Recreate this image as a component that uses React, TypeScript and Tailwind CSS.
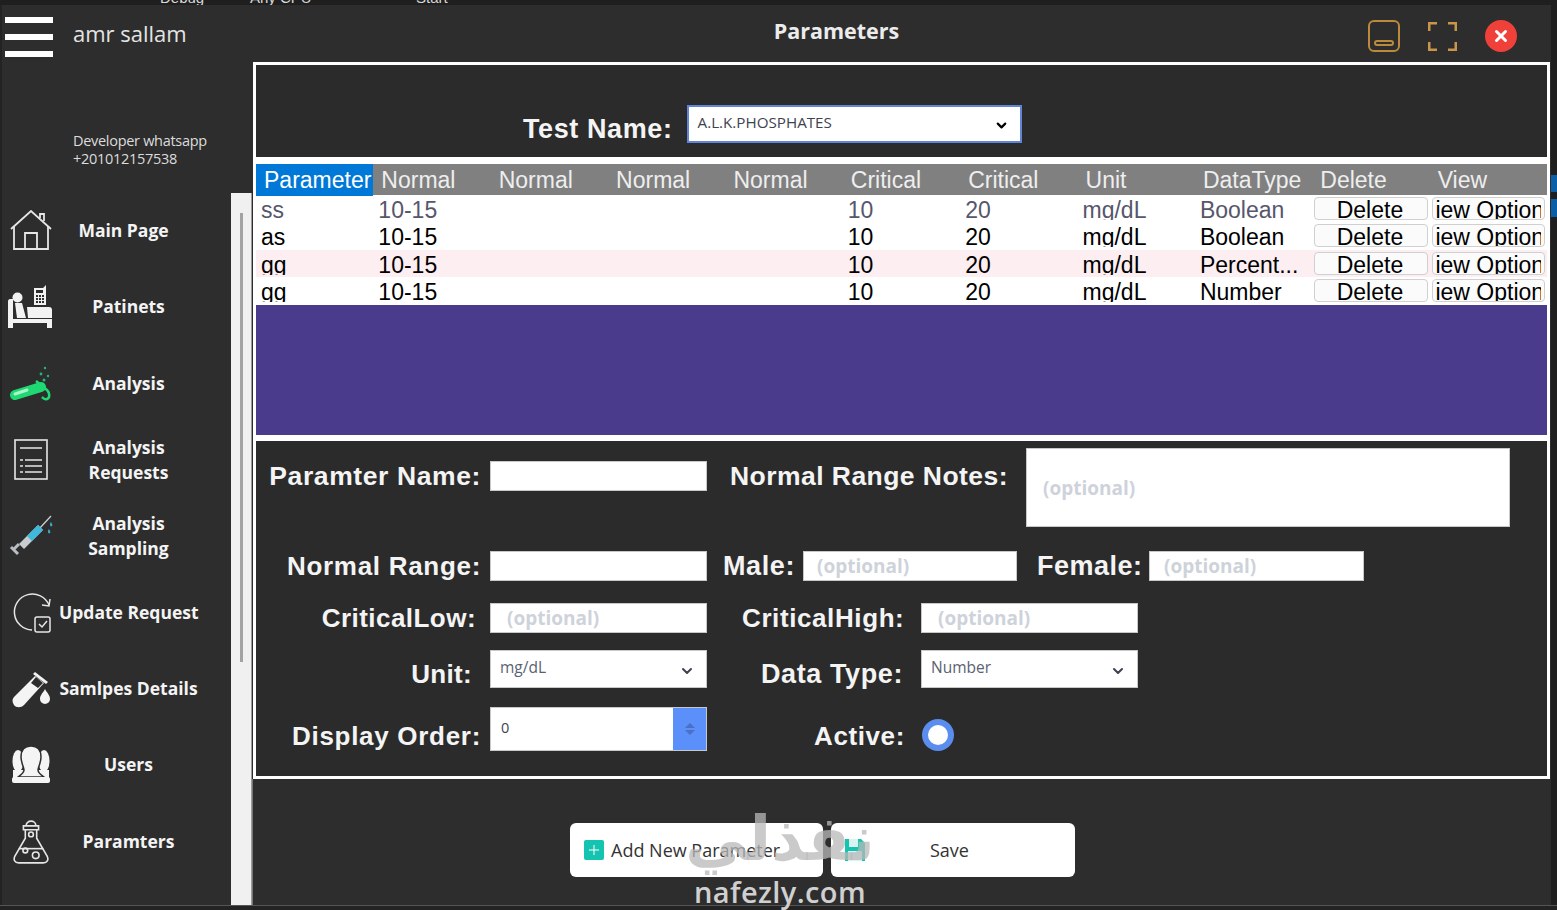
import React from 'react';
import { ChevronDown, X, Plus } from 'lucide-react';

const HomeIcon = () => (
  <svg width="42" height="42" viewBox="0 0 42 42" fill="none" stroke="#e6e6e6" strokeWidth="1.8">
    <path d="M1 19 21 1l20 18" />
    <path d="M30 8V4h4v7" />
    <path d="M4 16v23h34V16" />
    <path d="M15 39V23h12v16" />
  </svg>
);

const BedIcon = () => (
  <svg width="46" height="44" viewBox="0 0 46 44" fill="#f2f2f2">
    <circle cx="9.500" cy="12.500" r="5" />
    <path d="M0 16c0-1 1-2 2-2h3v29H0z" />
    <path d="M7 18h7l4 15H9z" />
    <path d="M19 22h22c2 0 3 1 3 3v8H20z" />
    <path d="M5 34h39v4h0v5h-5v-5H5z" />
    <path d="M26 3h9l3-3v20H26z" />
    <path d="M28 5h7v3h-7z" fill="#2d2d2d" />
    <path d="M28 10h2v2h-2zM31 10h2v2h-2zM34 10h2v2h-2zM28 13h2v2h-2zM31 13h2v2h-2zM34 13h2v2h-2zM28 16h2v2h-2zM31 16h2v2h-2zM34 16h2v2h-2z" fill="#2d2d2d" />
  </svg>
);

const TubeIcon = () => (
  <svg width="44" height="36" viewBox="0 0 44 36" fill="none">
    <path d="M6 29 32 21" stroke="#1fd873" strokeWidth="10" strokeLinecap="round" />
    <path d="M6 28 18 24" stroke="#a8f5c8" strokeWidth="3" strokeLinecap="round" />
    <path d="M27 15l11 9c3 3 3 8 0 9-3 1-4-1-5-2" stroke="#1fd873" strokeWidth="2.500" />
    <g fill="#1fb87a">
      <circle cx="36" cy="2" r="1.200" />
      <circle cx="32" cy="8" r="1.400" />
      <circle cx="39" cy="10" r="1.200" />
      <circle cx="35" cy="14" r="1.500" />
    </g>
  </svg>
);

const ListIcon = () => (
  <svg width="34" height="42" viewBox="0 0 34 42" fill="none" stroke="#e6e6e6" strokeWidth="1.600">
    <rect x="1" y="1" width="32" height="39" />
    <path d="M6 9h22M11 21h17M11 27h17M11 33h17" />
    <path d="M6 21h3M6 27h3M6 33h3" />
  </svg>
);

const SyringeIcon = () => (
  <svg width="44" height="44" viewBox="0 0 44 44" fill="none">
    <path d="M30 15 42 2" stroke="#cfd4d8" strokeWidth="1.200" />
    <path d="M10 30 29 11l5 5-19 19z" fill="#c6ccd0" />
    <path d="M18 22 29 11l5 5-11 11z" fill="#3fb8dc" />
    <path d="M10 30l-5 5M2 33l7 7" stroke="#b8bec2" strokeWidth="3" />
    <path d="M42 8c1 2 2 3 1 4s-2 0-2-1 0-2 1-3zM40 15c1 2 2 3 1 4s-2 0-2-1 0-2 1-3z" fill="#38a8cc" />
  </svg>
);

const UpdateIcon = () => (
  <svg width="42" height="42" viewBox="0 0 42 42" fill="none" stroke="#e6e6e6" strokeWidth="1.500">
    <path d="M39 13A18 18 0 1 0 22 38" />
    <path d="M32 13l7 1 1-7" />
    <rect x="25" y="25" width="15" height="15" rx="2" />
    <path d="m29 32 3 3 5-6" />
  </svg>
);

const SampleIcon = () => (
  <svg width="40" height="38" viewBox="0 0 40 38" fill="#f4f4f4">
    <path d="M24 6 33 13 13 35c-3 3-8 3-10 0s-2-6 0-8z" />
    <path d="M24 2l13 10-2 2-13-10z" />
    <path d="M25 7l7 6-5 5-7-5z" fill="#2d2d2d" />
    <path d="M34 19c2 4 5 6 5 10a5 5 0 0 1-10 0c0-4 3-6 5-10z" />
  </svg>
);

const UsersIcon = () => (
  <svg width="38" height="38" viewBox="0 0 38 38" fill="#f4f4f4">
    <ellipse cx="6" cy="15" rx="5.500" ry="11" />
    <ellipse cx="32" cy="15" rx="5.500" ry="11" />
    <path d="M1 24h36v8H1z" />
    <path d="M19 0c6 0 10 4 10 11 0 6-3 10-3 13 0 3 3 5 6 7H6c3-2 6-4 6-7 0-3-3-7-3-13C9 4 13 0 19 0z" stroke="#2d2d2d" strokeWidth="1.500" />
    <rect x="0" y="31" width="38" height="6" rx="2" />
  </svg>
);

const FlaskIcon = () => (
  <svg width="36" height="46" viewBox="0 0 38 46" fill="none" stroke="#e6e6e6" strokeWidth="1.700">
    <path d="M14 5a5 4 0 0 1 10 0" />
    <path d="M11 6h16v4H11zM13 10v9L2 38c-2 4 0 7 4 7h26c4 0 6-3 4-7L25 19v-9" />
    <circle cx="19" cy="15" r="2.500" />
    <path d="M6 30h26" />
    <circle cx="13" cy="32" r="2.500" />
    <circle cx="24" cy="37" r="3.500" />
  </svg>
);

const DocIcon = () => (
  <svg width="32" height="12" viewBox="0 0 32 12" fill="#f4f4f4">
    <path d="M1 1h19l11 11H1z" />
  </svg>
);

const navItems = [
  { icon: <HomeIcon />, label: ['Main Page'], extra: 'pr-[10px]' },
  { icon: <BedIcon />, label: ['Patinets'], extra: '' },
  { icon: <TubeIcon />, label: ['Analysis'], extra: '' },
  { icon: <ListIcon />, label: ['Analysis', 'Requests'], extra: '' },
  { icon: <SyringeIcon />, label: ['Analysis', 'Sampling'], extra: '' },
  { icon: <UpdateIcon />, label: ['Update Request'], extra: '' },
  { icon: <SampleIcon />, label: ['Samlpes Details'], extra: '' },
  { icon: <UsersIcon />, label: ['Users'], extra: '' },
  { icon: <FlaskIcon />, label: ['Paramters'], extra: '' },
];

const headers = ['Parameter', 'Normal', 'Normal', 'Normal', 'Normal', 'Critical', 'Critical', 'Unit', 'DataType', 'Delete', 'View'];

const rows = [
  { name: 'ss', type: 'Boolean', bg: 'bg-white', text: 'text-[#56566c]', h: 'h-[27px]' },
  { name: 'as', type: 'Boolean', bg: 'bg-white', text: 'text-black', h: 'h-[28px]' },
  { name: 'gg', type: 'Percent...', bg: 'bg-[#fdeef1]', text: 'text-black', h: 'h-[27px]' },
  { name: 'gg', type: 'Number', bg: 'bg-white', text: 'text-black', h: 'h-[28px]' },
];

const Cell = ({ children }: { children?: React.ReactNode }) => (
  <div className="h-[25px] pl-[5px] pt-[2px] overflow-hidden whitespace-nowrap leading-[26px]">{children}</div>
);

const GridBtn = ({ children, clip = '', shift = '' }: { children: React.ReactNode; clip?: string; shift?: string }) => (
  <div className="h-[23px] mt-[2px] mx-[2px] overflow-hidden rounded-[4px] border border-[#d0d0d0] bg-[#fbfbfb] text-black leading-[25px]">
    <div className={`h-full flex justify-center overflow-hidden ${clip}`}>
      <span className={`shrink-0 whitespace-nowrap ${shift}`}>{children}</span>
    </div>
  </div>
);

const Label = ({ children, className = '' }: { children: React.ReactNode; className?: string }) => (
  <div className={`font-['Liberation_Sans',sans-serif] font-bold leading-none text-[#f4f4f4] text-right whitespace-nowrap shrink-0 ${className}`}>
    {children}
  </div>
);

const Field = ({ w, placeholder, pad = 'pl-[16px]' }: { w: string; placeholder?: string; pad?: string }) => (
  <input
    readOnly
    placeholder={placeholder}
    className={`${w} ${pad} block h-[30px] bg-white border border-[#c8c8c8] font-['Open_Sans',sans-serif] font-bold text-[19px] outline-none placeholder:text-[#ced2da]`}
  />
);

const Dropdown = ({ value }: { value: string }) => (
  <div className="w-[217px] h-[38px] bg-white border border-[#c8c8c8] pl-[9px] pr-[11px] flex items-center justify-between font-['Open_Sans',sans-serif] text-[15.5px] text-[#5a6272]">
    <span className="-mt-[2px]">{value}</span>
    <ChevronDown size={16} strokeWidth={3} className="text-[#3c4250] mt-[3px]" />
  </div>
);

export default function App() {
  return (
    <div className="relative w-[1557px] h-[910px] overflow-hidden bg-[#2d2d2d] flex flex-col font-['Liberation_Sans',sans-serif]">
      {/* ide toolbar peeking out behind the app window */}
      <div className="h-[5px] shrink-0 bg-[#1f1f1f] flex items-end overflow-hidden text-[15px] leading-[14px] text-[#d8d8d8]">
        <div className="ml-[160px] w-[90px]">Debug</div>
        <div className="w-[166px]">Any CPU</div>
        <div>Start</div>
      </div>

      <div className="flex flex-1 min-h-0">
        <div className="w-[2px] shrink-0 bg-[#232323]" />

        {/* sidebar */}
        <div className="w-[250px] shrink-0 flex flex-col">
          <div className="h-[188px] shrink-0 relative">
            <div className="flex items-start">
              <div className="ml-[3px] mt-[12px] w-[48px] flex flex-col gap-[11px]">
                <div className="h-[6px] bg-white" />
                <div className="h-[6px] bg-white" />
                <div className="h-[6px] bg-white" />
              </div>
              <div className="ml-[20px] mt-[12px] font-['Open_Sans',sans-serif] text-[22px] leading-[32px] text-[#e4e4e4]">amr sallam</div>
            </div>
            <div className="ml-[71px] mt-[75px] font-['Open_Sans',sans-serif] text-[14.5px] leading-[18px] tracking-[-0.3px] text-[#dcdcdc]">
              Developer whatsapp
              <br />
              +201012157538
            </div>
          </div>
          <div className="flex flex-1 min-h-0">
            <div className="w-[229px] shrink-0 overflow-hidden">
              {navItems.map((item) => (
                <div key={item.label[0] + item.label.length} className="h-[76.3px] flex items-center">
                  <div className="w-[57px] shrink-0 flex justify-center">{item.icon}</div>
                  <div className={`w-[139px] -mt-[1px] text-center whitespace-nowrap font-['Open_Sans',sans-serif] font-bold text-[17.5px] leading-[25px] text-[#f4f4f4] ${item.extra}`}>
                    {item.label.map((l) => (
                      <div key={l}>{l}</div>
                    ))}
                  </div>
                </div>
              ))}
              <div className="pl-[13px] pt-[25px]">
                <DocIcon />
              </div>
            </div>
            <div className="w-[21px] shrink-0 bg-[#f0f0f0] border-r border-[#9a9a9a]">
              <div className="mx-auto mt-[20px] w-[3px] h-[449px] bg-[#a2a2a2]" />
            </div>
          </div>
        </div>

        {/* main */}
        <div className="flex-1 min-w-0 flex flex-col">
          <div className="h-[57px] shrink-0 relative flex items-start justify-center">
            <div className="mt-[9px] mr-[130px] font-['Open_Sans',sans-serif] font-bold text-[21.5px] leading-[34px] text-[#ececec]">Parameters</div>
            <div className="absolute right-[34px] top-[15px] flex items-center">
              <div className="w-[32px] h-[32px] rounded-[6px] border-2 border-[#bc8a3c] flex items-end justify-center pb-[4px]">
                <div className="w-[20px] h-[6px] rounded-full border-2 border-[#bc8a3c]" />
              </div>
              <svg className="ml-[28px]" width="29" height="29" viewBox="0 0 29 29" fill="none" stroke="#c8954a" strokeWidth="3">
                <path d="M1 9V1h8M20 1h8v8M28 20v8h-8M9 28H1v-8" />
              </svg>
              <div className="ml-[28px] w-[32px] h-[32px] rounded-full bg-[#f0403a] flex items-center justify-center">
                <X size={18} strokeWidth={4} className="text-white" />
              </div>
            </div>
          </div>

          <div className="h-[717px] shrink-0 mx-px border-[3px] border-white bg-white flex flex-col">
            {/* test picker */}
            <div className="h-[92px] shrink-0 bg-[#2b2b2b] pl-[267px] pt-[40px] flex items-start">
              <Label className="mt-[11px] text-[27px] tracking-[0.6px]">Test Name:</Label>
              <div className="ml-[14px] w-[335px] h-[38px] bg-white border-2 border-[#5f84d8] pl-[9px] pr-[11px] flex items-center justify-between font-['Open_Sans',sans-serif] text-[15.2px] text-[#3e4350]">
                <span className="-mt-[3px]">A.L.K.PHOSPHATES</span>
                <ChevronDown size={15} strokeWidth={3.500} className="text-black mt-[3px]" />
              </div>
            </div>

            {/* grid */}
            <div className="mt-[7px] shrink-0 text-[23px]">
              <div className="grid grid-cols-11 h-[31px] bg-[#808080] text-[#eeeeee] leading-[32px]">
                {headers.map((h, i) => (
                  <div key={i} className={i === 0 ? 'bg-[#0078d7] text-white pl-[8px] whitespace-nowrap' : 'pl-[8px] whitespace-nowrap'}>
                    {h}
                  </div>
                ))}
              </div>
              {rows.map((r, i) => (
                <div key={i} className={`grid grid-cols-11 overflow-hidden ${r.h} ${r.bg} ${r.text}`}>
                  <Cell>{r.name}</Cell>
                  <Cell>10-15</Cell>
                  <Cell />
                  <Cell />
                  <Cell />
                  <Cell>10</Cell>
                  <Cell>20</Cell>
                  <Cell>mg/dL</Cell>
                  <Cell>{r.type}</Cell>
                  <GridBtn shift="-translate-x-[1px]">Delete</GridBtn>
                  <GridBtn clip="ml-[3px] mr-[3px]" shift="-translate-x-[6px]">View Option</GridBtn>
                </div>
              ))}
              <div className="h-[130px] bg-[#4b3b8d]" />
            </div>

            {/* form */}
            <div className="mt-[6px] flex-1 bg-[#2b2b2b] pt-[7px]">
              <div className="flex items-start">
                <Label className="mt-[15px] w-[225px] text-[26.5px] tracking-[0.6px]">Paramter Name:</Label>
                <div className="ml-[9px] mt-[13px]"><Field w="w-[217px]" /></div>
                <Label className="ml-[22px] mt-[15px] w-[279px] text-[26.5px] tracking-[0.45px]">Normal Range Notes:</Label>
                <textarea
                  readOnly
                  rows={1}
                  placeholder="(optional)"
                  className="ml-[18px] w-[484px] h-[79px] resize-none bg-white border border-[#c8c8c8] pl-[16px] pt-[25px] font-['Open_Sans',sans-serif] font-bold text-[19px] outline-none placeholder:text-[#ced2da]"
                />
              </div>
              <div className="mt-[24px] flex items-center">
                <Label className="w-[225px] text-[26px] tracking-[0.7px]">Normal Range:</Label>
                <div className="ml-[9px]"><Field w="w-[217px]" /></div>
                <Label className="ml-[16px] w-[72px] text-[27px] tracking-[0.6px]">Male:</Label>
                <div className="ml-[8px]"><Field w="w-[214px]" pad="pl-[13px]" placeholder="(optional)" /></div>
                <Label className="ml-[20px] w-[104px] text-[27px] tracking-[0.5px]">Female:</Label>
                <div className="ml-[8px]"><Field w="w-[215px]" pad="pl-[14px]" placeholder="(optional)" /></div>
              </div>
              <div className="mt-[22px] flex items-center">
                <Label className="w-[220px] text-[26px] tracking-[0.45px]">CriticalLow:</Label>
                <div className="ml-[14px]"><Field w="w-[217px]" placeholder="(optional)" /></div>
                <Label className="ml-[35px] w-[161px] text-[26px] tracking-[0.6px]">CriticalHigh:</Label>
                <div className="ml-[18px]"><Field w="w-[217px]" placeholder="(optional)" /></div>
              </div>
              <div className="mt-[17px] flex items-center">
                <Label className="w-[216px] mt-[10px] text-[26px] tracking-[0.3px]">Unit:</Label>
                <div className="ml-[18px]"><Dropdown value="mg/dL" /></div>
                <Label className="ml-[53px] w-[143px] mt-[10px] text-[27px] tracking-[0.6px]">Data Type:</Label>
                <div className="ml-[18px]"><Dropdown value="Number" /></div>
              </div>
              <div className="mt-[19px] flex items-center">
                <Label className="w-[225px] mt-[14px] text-[26px] tracking-[0.7px]">Display Order:</Label>
                <div className="ml-[9px] w-[217px] h-[44px] bg-white border border-[#c8c8c8] flex">
                  <div className="flex-1 pl-[10px] pt-[9px] font-['Open_Sans',sans-serif] text-[14.5px] text-[#3e4350]">0</div>
                  <div className="w-[33px] bg-[#5b8ff9] flex flex-col items-center justify-center gap-[2px]">
                    <div className="w-0 h-0 border-x-[5px] border-x-transparent border-b-[5px] border-b-[#4a6fc4]" />
                    <div className="w-0 h-0 border-x-[5px] border-x-transparent border-t-[5px] border-t-[#4a6fc4]" />
                  </div>
                </div>
                <Label className="ml-[107px] w-[89px] mt-[14px] text-[26px] tracking-[0.6px]">Active:</Label>
                <div className="ml-[19px] mt-[11px] w-[32px] h-[32px] rounded-full bg-[#5b8def] flex items-center justify-center">
                  <div className="w-[20px] h-[20px] rounded-full bg-white" />
                </div>
              </div>
            </div>
          </div>

          {/* footer actions */}
          <div className="flex-1 border-l border-[#777777] pl-[317px] pt-[44px] flex items-start gap-[8px]">
            <div className="w-[253px] h-[54px] rounded-[6px] bg-white flex items-center pl-[14px] font-['Open_Sans',sans-serif] text-[18px] text-[#333333]">
              <div className="w-[20px] h-[20px] rounded-[2px] bg-[#14c4b0] flex items-center justify-center">
                <Plus size={16} strokeWidth={1.500} className="text-white" />
              </div>
              <span className="ml-[7px]">Add New Parameter</span>
            </div>
            <div className="w-[244px] h-[54px] rounded-[6px] bg-white flex items-center pl-[14px] font-['Open_Sans',sans-serif] text-[18px] text-[#333333]">
              <svg width="20" height="22" viewBox="0 0 20 22">
                <path d="M0 0h16l4 4v18H0z" fill="#14c4b0" />
                <path d="M4 0h9v8H4zM3 12h14v10H3z" fill="#d8f4ef" />
              </svg>
              <span className="ml-[65px]">Save</span>
            </div>
          </div>
        </div>

        <div className="w-[6px] shrink-0 bg-[#1f1f1f] overflow-hidden">
          <div className="mt-[170px] h-[17px] bg-[#0a5fa8]" />
          <div className="mt-[7px] h-[18px] bg-[#0a5fa8]" />
        </div>
      </div>

      <div className="h-[5px] shrink-0 bg-[#232323] border-t border-[#555555]" />

      {/* nafezly watermark */}
      <div className="absolute left-[680px] top-[802px] w-[200px] text-center text-[#b8b8b8]/75 pointer-events-none select-none">
        <div className="font-['DejaVu_Sans',sans-serif] font-bold text-[62px] leading-[73px]" dir="rtl">نفذلي</div>
        <div className="font-['Open_Sans',sans-serif] font-semibold text-[29px] leading-[34px] text-[#d0d0d0] tracking-[0.4px]">nafezly.com</div>
      </div>
    </div>
  );
}
